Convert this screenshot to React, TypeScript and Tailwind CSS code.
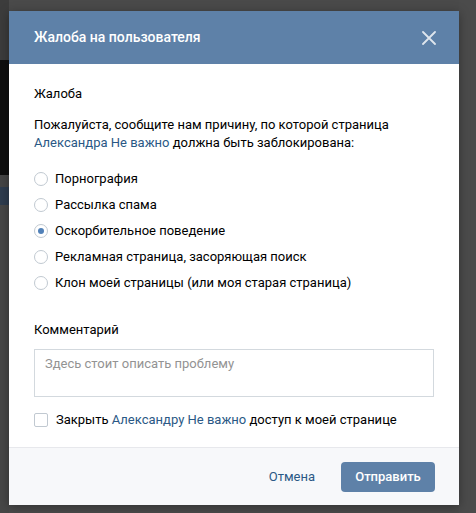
import { useState } from "react";

const reasons = [
  "Порнография",
  "Рассылка спама",
  "Оскорбительное поведение",
  "Рекламная страница, засоряющая поиск",
  "Клон моей страницы (или моя старая страница)",
];

export default function App() {
  const [reason, setReason] = useState(2);
  const [closeAccess, setCloseAccess] = useState(false);

  return (
    <div
      className="relative h-[513px] w-[476px] overflow-hidden bg-[#4a4a4a]"
      style={{ fontFamily: "Roboto, 'Open Sans', sans-serif" }}
    >
      {/* dimmed page behind the box */}
      <div className="flex h-full">
        <div className="flex w-[9px] flex-col">
          <div className="h-[60px] bg-[#3c3c3c]" />
          <div className="h-[115px] bg-[#0e0e0e]" />
          <div className="h-[12px] bg-[#454545]" />
          <div className="h-[18px] bg-[#2f3d4f]" />
          <div className="flex-1 bg-[#474747]" />
        </div>
        <div className="flex-1" />
        <div className="w-[17px] bg-[#4b4b4b]" />
      </div>

      {/* report box */}
      <div className="absolute left-[9px] top-[11px] flex w-[450px] flex-col bg-white shadow-[0_2px_10px_rgba(0,0,0,0.35)]">
        <div className="flex h-[53px] items-center justify-between bg-[#5e81a8] pl-[25px] pr-[23px]">
          <span className="text-[14px] font-medium text-white">Жалоба на пользователя</span>
          <svg width="14" height="14" viewBox="0 0 14 14" className="opacity-80">
            <path d="M1 1 L13 13 M13 1 L1 13" stroke="white" strokeWidth="1.8" strokeLinecap="round" />
          </svg>
        </div>

        <div className="px-[25px] pb-[18px] pt-[21px] text-[13px] text-black">
          <div className="leading-[18px]">Жалоба</div>
          <p className="mt-[13px] leading-[18px]">
            Пожалуйста, сообщите нам причину, по которой страница{" "}
            <span className="text-[#2a5885]">Александра Не важно</span> должна быть заблокирована:
          </p>

          <div className="mt-[14px] flex flex-col">
            {reasons.map((r, i) => (
              <label key={r} className="flex h-[26px] cursor-pointer items-center" onClick={() => setReason(i)}>
                <span className="flex h-[14px] w-[14px] items-center justify-center rounded-full border border-[#c1c9d1] bg-white">
                  {reason === i && <span className="h-[6px] w-[6px] rounded-full bg-[#5181b8]" />}
                </span>
                <span className="ml-[7px] leading-[18px]">{r}</span>
              </label>
            ))}
          </div>

          <div className="mt-[25px] leading-[18px]">Комментарий</div>
          <div className="mt-[10px] h-[48px] w-[400px] border border-[#d3d9de] px-[10px] pt-[5px] leading-[18px] text-[#939393]">
            Здесь стоит описать проблему
          </div>

          <label className="mt-[14px] flex cursor-pointer items-center" onClick={() => setCloseAccess(!closeAccess)}>
            <span className="flex h-[14px] w-[14px] items-center justify-center rounded-[2px] border border-[#c1c9d1] bg-white">
              {closeAccess && (
                <svg width="10" height="8" viewBox="0 0 10 8">
                  <path d="M1 4 L4 7 L9 1" stroke="#5181b8" strokeWidth="1.6" fill="none" />
                </svg>
              )}
            </span>
            <span className="ml-[8px] leading-[18px]">
              Закрыть <span className="text-[#2a5885]">Александру Не важно</span> доступ к моей странице
            </span>
          </label>
        </div>

        <div className="flex h-[58px] items-center justify-end gap-[26px] border-t border-[#e7e8ec] bg-[#f7f8fa] pr-[24px]">
          <button className="text-[13px] text-[#2a5885]">Отмена</button>
          <button className="h-[30px] w-[94px] rounded-[4px] bg-[#5e81a8] text-[13px] font-medium text-white">
            Отправить
          </button>
        </div>
      </div>
    </div>
  );
}
